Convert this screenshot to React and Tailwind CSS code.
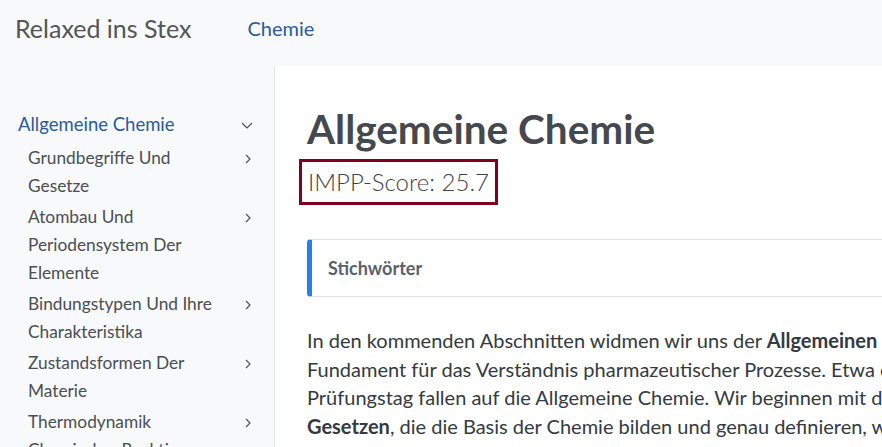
import React from 'react';

const font = { fontFamily: 'Lato, "Open Sans", sans-serif' };

function ChevronRight() {
  return (
    <svg width="10" height="12" viewBox="0 0 10 12" fill="none" stroke="#4b5560" strokeWidth="1.2">
      <path d="M3 2 L7 6 L3 10" />
    </svg>
  );
}

function ChevronDown() {
  return (
    <svg width="14" height="10" viewBox="0 0 14 10" fill="none" stroke="#4b5560" strokeWidth="1.2">
      <path d="M2 3 L7 8 L12 3" />
    </svg>
  );
}

const subItems = [
  ['Grundbegriffe Und', 'Gesetze'],
  ['Atombau Und', 'Periodensystem Der', 'Elemente'],
  ['Bindungstypen Und Ihre', 'Charakteristika'],
  ['Zustandsformen Der', 'Materie'],
  ['Thermodynamik', 'Chemischer Reaktionen'],
];

export default function App() {
  return (
    <div className="w-[882px] h-[447px] overflow-hidden bg-white flex flex-col" style={font}>
      {/* Header */}
      <header className="h-[66px] shrink-0 bg-[#f8f9fa] flex items-center pb-[10px]">
        <span className="ml-[15px] text-[25px] text-[#545555] leading-none">Relaxed ins Stex</span>
        <span className="ml-[56px] text-[20px] text-[#2a5b9c] leading-none">Chemie</span>
      </header>

      <div className="flex flex-1 min-h-0">
        {/* Sidebar */}
        <aside className="w-[275px] shrink-0 bg-[#f8f9fa] border-r border-[#e3e5e8] pt-[45px] pl-[18px] pr-[20px]">
          <div className="flex items-center justify-between h-[28px] text-[18.5px] text-[#2a5b9c]">
            <span>Allgemeine Chemie</span>
            <ChevronDown />
          </div>
          <ul className="mt-[5px] pl-[10px] flex flex-col gap-[3px]">
            {subItems.map((lines, i) => (
              <li key={i} className="flex justify-between text-[17.3px] leading-[28px] text-[#4a4f55]">
                <span className="whitespace-nowrap">
                  {lines.map((l, j) => (
                    <span key={j} className="block">{l}</span>
                  ))}
                </span>
                <span className="pt-[9px] pr-[1px]"><ChevronRight /></span>
              </li>
            ))}
          </ul>
        </aside>

        {/* Main */}
        <main className="flex-1 min-w-0 overflow-hidden pl-[32px] pt-[36px]">
          <h1 className="text-[40.5px] font-bold text-[#45494e] leading-[54px] whitespace-nowrap">Allgemeine Chemie</h1>
          <div className="mt-[3px] ml-[-8px] inline-block border-[3px] border-[#800020] px-[6px] h-[46px] leading-[39px] text-[24px] font-light text-[#3d4349] whitespace-nowrap">
            IMPP-Score: 25.7
          </div>
          <div className="mt-[34px] h-[58px] rounded-l-[4px] border border-l-[5px] border-[#dee2e6] border-l-[#2780e3] flex items-center pl-[16px] w-[700px]">
            <span className="text-[18px] font-bold text-[#5a6169]">Stichwörter</span>
          </div>
          <p className="mt-[29px] text-[20px] leading-[28.5px] text-[#343a40] whitespace-nowrap">
            In den kommenden Abschnitten widmen wir uns der <b>Allgemeinen Chemie</b>, dem<br />
            Fundament für das Verständnis pharmazeutischer Prozesse. Etwa ein Viertel der Fragen am<br />
            Prüfungstag fallen auf die Allgemeine Chemie. Wir beginnen mit den <b>Grundbegriffen und</b><br />
            <b>Gesetzen</b>, die die Basis der Chemie bilden und genau definieren, wie Stoffe reagieren.
          </p>
        </main>
      </div>
    </div>
  );
}
